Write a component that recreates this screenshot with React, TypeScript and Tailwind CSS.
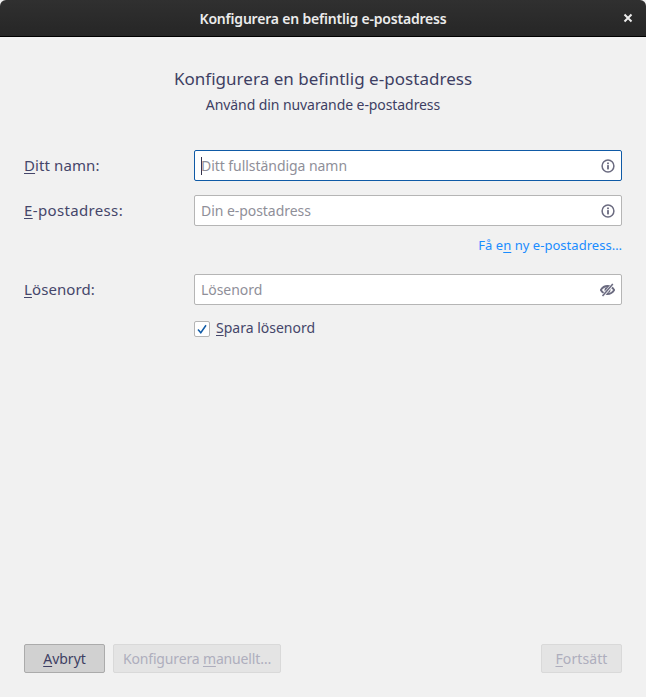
import React from "react";

const font = { fontFamily: '"Noto Sans", "Open Sans", sans-serif' };

function InfoIcon() {
  return (
    <svg width="14" height="14" viewBox="0 0 14 14" fill="none" className="shrink-0">
      <circle cx="7" cy="7" r="5.9" stroke="#6b6b80" strokeWidth="1.5" />
      <rect x="6.1" y="6.1" width="1.8" height="4.3" fill="#6b6b80" />
      <rect x="6.1" y="3.5" width="1.8" height="1.7" fill="#6b6b80" />
    </svg>
  );
}

function EyeOffIcon() {
  return (
    <svg width="15" height="14" viewBox="0 0 15 14" fill="none" className="shrink-0">
      <path d="M0.8 7C2.4 4.4 4.7 3 7.5 3s5.1 1.4 6.7 4c-1.6 2.6-3.900 4-6.700 4S2.400 9.600 0.800 7Z" stroke="#6b6b80" strokeWidth="1.900" />
      <circle cx="7.500" cy="7" r="3" fill="#6b6b80" />
      <path d="M2.700 13 13 1" stroke="#f7f7f9" strokeWidth="2.800" />
      <path d="M2.500 13 12.800 1" stroke="#6b6b80" strokeWidth="1.500" />
    </svg>
  );
}

function Field({ placeholder, focused, icon }: { placeholder: string; focused?: boolean; icon: React.ReactNode }) {
  return (
    <div
      className={
        "flex h-[31px] w-[428px] items-center rounded-[2px] border bg-white pl-[6px] pr-[6px] " +
        (focused ? "border-[#0f5aa6]" : "border-[#b5b5b5]")
      }
    >
      {focused && <span className="-mr-px h-[18px] w-px shrink-0 bg-[#33334d]" />}
      <span className="flex-1 text-[14px] leading-none tracking-[-0.05px] text-[#8f8f99]">{placeholder}</span>
      {icon}
    </div>
  );
}

function Label({ k, rest, wide }: { k: string; rest: string; wide?: boolean }) {
  return (
    <span className={"w-[170px] shrink-0 text-[15px] text-[#45466a] " + (wide ? "tracking-[0.35px]" : "tracking-[0.1px]")}>
      <span className="underline underline-offset-2">{k}</span>
      {rest}
    </span>
  );
}

export default function App() {
  return (
    <div className="flex h-[697px] w-[646px] flex-col overflow-hidden bg-[#f1f1f1]" style={font}>
      <header className="relative flex h-[37px] shrink-0 items-center justify-center rounded-t-[6px] border-b border-black bg-gradient-to-b from-[#303030] to-[#262626]">
        <span className="text-[14px] font-semibold tracking-[-0.2px] text-[#ececec]">Konfigurera en befintlig e-postadress</span>
        <svg width="10" height="10" viewBox="0 0 10 10" className="absolute right-[13px] top-[13px]">
          <path d="M1.500 1.500 8.500 8.500M8.500 1.500 1.500 8.500" stroke="#ececec" strokeWidth="2" />
        </svg>
      </header>

      <main className="flex flex-1 flex-col px-6">
        <h1 className="mt-[30px] text-center text-[17px] leading-6 font-normal tracking-[0.03px] text-[#3e3f63]">Konfigurera en befintlig e-postadress</h1>
        <p className="mt-[4px] text-center text-[14px] leading-5 tracking-[-0.08px] text-[#3e3f63]">Använd din nuvarande e-postadress</p>

        <div className="mt-[35px] flex items-center">
          <Label k="D" rest="itt namn:" />
          <Field placeholder="Ditt fullständiga namn" focused icon={<InfoIcon />} />
        </div>
        <div className="mt-[14px] flex items-center">
          <Label k="E" rest="-postadress:" wide />
          <Field placeholder="Din e-postadress" icon={<InfoIcon />} />
        </div>
        <div className="mt-[10px] text-right text-[13px] leading-[18px] tracking-[0.03px] text-[#1a8cff]">
          Få e<span className="underline underline-offset-2">n</span> ny e-postadress…
        </div>
        <div className="mt-[20px] flex items-center">
          <Label k="L" rest="ösenord:" />
          <Field placeholder="Lösenord" icon={<EyeOffIcon />} />
        </div>
        <div className="mt-[14px] ml-[170px] flex items-center gap-[6px]">
          <span className="flex h-[16px] w-[16px] translate-y-px items-center justify-center rounded-[2px] border border-[#b5b5b5] bg-white">
            <svg width="12" height="12" viewBox="0 0 12 12" fill="none">
              <path d="M2 6.500 4.800 9.700 10 2.200" stroke="#0f5aa6" strokeWidth="1.500" />
            </svg>
          </span>
          <span className="text-[14px] leading-[18px] text-[#45466a]">
            <span className="underline underline-offset-2">S</span>para lösenord
          </span>
        </div>

        <footer className="mt-auto mb-[24px] flex items-center">
          <button className="h-[29px] w-[81px] rounded-[2px] border border-[#ababab] bg-[#d1d1d1] text-[14px] text-[#3e3f63]">
            <span className="underline underline-offset-2">A</span>vbryt
          </button>
          <button className="ml-[8px] h-[29px] w-[168px] rounded-[2px] border border-[#d9d9d9] bg-[#e4e4e4] text-[14px] tracking-[-0.15px] text-[#aeaebd]">
            Konfigurera <span className="underline underline-offset-2">m</span>anuellt…
          </button>
          <button className="ml-auto h-[29px] w-[81px] rounded-[2px] border border-[#d9d9d9] bg-[#e4e4e4] text-[14px] tracking-[0.1px] text-[#aeaebd]">
            <span className="underline underline-offset-2">F</span>ortsätt
          </button>
        </footer>
      </main>
    </div>
  );
}
